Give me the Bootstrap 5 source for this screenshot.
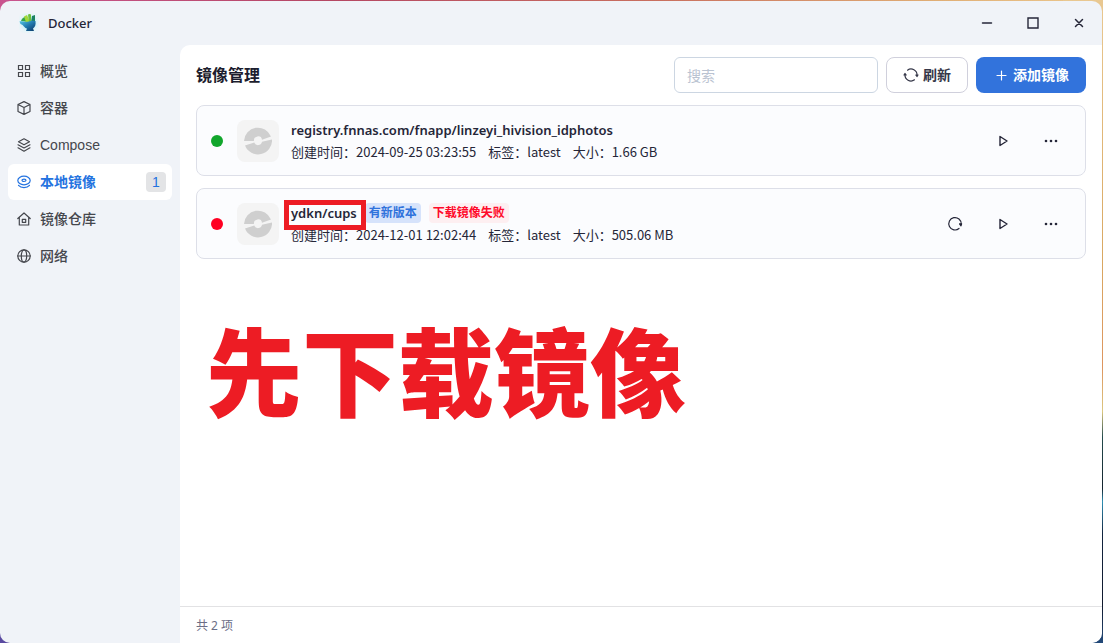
<!DOCTYPE html>
<html lang="zh-CN">
<head>
<meta charset="utf-8">
<meta name="viewport" content="width=device-width, initial-scale=1">
<title>Docker</title>
<link rel="stylesheet" href="https://cdn.jsdelivr.net/npm/bootstrap@5.3.0/dist/css/bootstrap.min.css">
<style>
:root{--ui:"Noto Sans","Noto Sans CJK SC",sans-serif;--ink:#252638;--line:#dddfe8}
body{font-family:var(--ui);font-size:13px;line-height:20px;color:var(--ink);
 background:linear-gradient(#e9c891 0,#d9a862 40%,#dd955f 57%,#dcc780 64%,#244b4d 68%,#14242f 76%,#2f8fb4 78%,#12243f 83%,#111a2e 94%,#234a7a) right/40px 100% no-repeat,
 linear-gradient(90deg,#c9548f,#b54763 30%,#c9705f 60%,#e0ae75 85%,#ecc98f) top/100% 40px no-repeat,#5a4aa0}
.app-window{background:#f0f3f8;border-radius:10px;margin:1px 1px 0 0;height:calc(100vh - 1px)}
.titlebar{height:44px;padding:0 12px 0 18px}
.app-name{font-size:13px;font-weight:500}
.win-btn,.act{border:0;background:none;padding:0;color:var(--ink);display:flex;align-items:center;justify-content:center}
.win-btn{width:22px;height:22px}
.sidebar{width:180px;padding:8px;gap:1px}
.side-link{height:36px;padding:0 6px 0 9px;gap:9px;border-radius:6px;color:#45474d;text-decoration:none;font:500 14px/20px "Liberation Sans","Noto Sans CJK SC",sans-serif}
.side-link.active{background:#fff;color:#2473e0;font-weight:700}
.side-link .count{width:20px;height:20px;border-radius:4px;background:#e3e4e6;font-weight:400;color:#2473e0}
.pane{background:#fff;border-radius:10px 0 10px 0}
.pane-body{padding:12px 16px}
.page-title{font-size:16px;line-height:24px;font-weight:700;color:#1c1d2e}
.search{width:204px;height:36px;font-size:14px;border-color:#ccd6e2;border-radius:6px;padding:0 12px}
.search::placeholder{color:#bac3d1}
.tool{height:36px;border-radius:8px;font-size:14px;line-height:20px;font-weight:700;padding:0 16px;gap:4px}
.tool-plain{border:1px solid #d0d0dc;color:#363849;background:#fff}
.tool-main,.tool-main:hover{background:#3273dc;color:#fff}
.image-list{gap:12px}
.image-row{border:1px solid var(--line);border-radius:8px;background:#fbfcfe;padding:13px 18px 13px 14px;min-height:71px}
.dot{width:12px;height:12px;border-radius:50%;background:#11a62c}
.dot.failed{background:#ff0022}
.thumb{width:42px;height:42px;border-radius:8px;background:#f4f4f4;margin:0 12px 0 14px}
.image-name{font-size:13px;line-height:20px;font-weight:600;font-family:"Noto Sans","Noto Sans CJK SC",sans-serif}
.name-text{position:relative}
.name-text .frame{position:absolute;inset:-3px -9px -7px -7px;border:5px solid #ed1c24;z-index:1}
.tag{border-radius:4px;font-size:12px;line-height:20px;font-weight:700;padding:0 4px}
.tag-new{background:#d6e3fb;color:#2f72dc}
.tag-fail{background:#fdeff1;color:#ff0a2a}
.meta{font-family:"Noto Sans CJK SC",sans-serif;font-size:13px;gap:12px;margin-top:2px}
.act{width:32px;height:32px}
.callout{font:900 96px/120px "Noto Sans CJK SC",sans-serif;color:#ed1c24;margin:49px 0 0 10px;white-space:nowrap}
.pane-foot{border-top:1px solid #e2e2e4;height:37px;padding:1px 16px 0;font-size:12px;color:#6c6e86}
svg{fill:none;stroke:currentColor;stroke-width:1.2;stroke-linecap:round;stroke-linejoin:round;flex:none}
.solid{stroke:none}
</style>
</head>
<body>
<div class="app-window d-flex flex-column overflow-hidden">
 <header class="titlebar d-flex align-items-center flex-shrink-0">
  <svg width="22" height="22" viewBox="0 0 22 22" class="me-2 solid"><defs><linearGradient id="bowl" x2="1" y2="1"><stop stop-color="#55c9e8"/><stop offset=".5" stop-color="#1f79ad"/><stop offset="1" stop-color="#0b3566"/></linearGradient><radialGradient id="glow"><stop offset=".6" stop-color="#c8f3f8"/><stop offset="1" stop-color="#e2f5f8" stop-opacity=".4"/></radialGradient></defs><rect x="1" y="1" width="20" height="20" rx="5" fill="url(#glow)"/><path fill="#35a34b" d="M3 9c1-3 3-4 4-4l3 5z"/><path fill="#a4d838" d="M6 4.500 9 3l3 7H8z"/><path fill="#6fc13a" d="M10 2.500c2-1 3-.5 3 1V10h-2z"/><path fill="#1c8160" d="m14 4 3-1v7h-4z"/><path fill="url(#bowl)" d="M1.500 9.500C4 9 5 10 7 10c4 0 5-2 10.500-1 .5 4-.5 6-2.500 7.500l1 2.500H8l1-2.500C6 16 6 13 2.500 12z"/></svg>
  <span class="app-name">Docker</span>
  <div class="d-flex gap-4 ms-auto">
   <button class="win-btn" aria-label="最小化"><svg width="12" height="12" viewBox="0 0 12 12"><path d="M1.500 6h9" stroke-width="1.500"/></svg></button>
   <button class="win-btn" aria-label="最大化"><svg width="12" height="12" viewBox="0 0 12 12"><path stroke-linejoin="miter" stroke-width="1.400" d="M1 1h10v10H1z"/></svg></button>
   <button class="win-btn" aria-label="关闭"><svg width="12" height="12" viewBox="0 0 12 12"><path d="m2.500 2.500 7 7m0-7-7 7" stroke-width="1.500"/></svg></button>
  </div>
 </header>
 <div class="d-flex flex-grow-1">
  <nav class="sidebar d-flex flex-column flex-shrink-0">
   <a href="#" class="side-link d-flex align-items-center"><svg width="14" height="14" viewBox="0 0 14 14"><path stroke-linejoin="miter" d="M1.500 1.500h4v4h-4zM8.500 1.500h4v4h-4zM1.500 8.500h4v4h-4zM8.500 8.500h4v4h-4z"/></svg>概览</a>
   <a href="#" class="side-link d-flex align-items-center"><svg width="14" height="14" viewBox="0 0 14 14"><path d="m7 .6 6 2.900v7L7 13.400 1 10.500v-7zM1 3.500l6 3 6-3M7 6.500v6.900"/></svg>容器</a>
   <a href="#" class="side-link d-flex align-items-center"><svg width="14" height="14" viewBox="0 0 14 14"><path d="m7 .8 5.500 3L7 6.800l-5.500-3zM1 6.800l6 3.200 6-3.200M1 9.800l6 3.400 6-3.400"/></svg>Compose</a>
   <a href="#" class="side-link active d-flex align-items-center" aria-current="page"><svg width="14" height="14" viewBox="0 0 14 14"><ellipse cx="7" cy="5.500" rx="6.200" ry="4.300"/><ellipse cx="7" cy="5.300" rx="2" ry="1.200"/><path d="M1.500 10.300c2.500 3 8.500 3 11 0"/></svg>本地镜像<span class="count ms-auto text-center">1</span></a>
   <a href="#" class="side-link d-flex align-items-center"><svg width="14" height="14" viewBox="0 0 14 14"><path d="m.8 6.500 6.200-5.500 6.200 5.500M2.300 5.500v7.500h9.400V5.500M5.300 7.300h3.400v3H5.300z"/></svg>镜像仓库</a>
   <a href="#" class="side-link d-flex align-items-center"><svg width="14" height="14" viewBox="0 0 14 14"><circle cx="7" cy="7" r="6.200"/><ellipse cx="7" cy="7" rx="2.700" ry="6.200"/><path d="M.8 7h12.400"/></svg>网络</a>
  </nav>
  <main class="pane d-flex flex-column flex-grow-1">
   <div class="pane-body flex-grow-1">
    <div class="d-flex align-items-center gap-2 mb-2 pb-1">
     <h1 class="page-title mb-0 me-auto">镜像管理</h1>
     <input type="search" class="form-control search" placeholder="搜索" aria-label="搜索">
     <button class="btn tool tool-plain d-flex align-items-center"><svg width="16" height="16" viewBox="0 0 16 16"><path d="M4.500 3.200A6 6 0 0 1 14 8.500M11.500 12.800A6 6 0 0 1 2 7.500"/><path fill="currentColor" d="m12.800 8 1.200 1.500L15 8zM1 8l1-1.500L3.200 8z"/></svg>刷新</button>
     <button class="btn tool tool-main d-flex align-items-center"><svg width="16" height="16" viewBox="0 0 16 16"><path d="M8.500 4v9M4 8.500h9"/></svg>添加镜像</button>
    </div>
    <div class="image-list d-flex flex-column">
    <article class="image-row d-flex align-items-center">
     <span class="dot"></span>
     <div class="thumb d-flex align-items-center justify-content-center"><svg class="solid" width="28" height="28" viewBox="0 0 28 28"><g fill="#cfcfcf"><path d="M0 14A14 14 0 0 1 27 9.500L18 12.800A4 4 0 0 0 10 14z"/><path d="M28 12.500A14 14 0 0 1 1 18.500L10.300 15.500A4 4 0 0 0 18 14.800z"/></g></svg></div>
     <div class="flex-grow-1">
      <div class="image-name">registry.fnnas.com/fnapp/linzeyi_hivision_idphotos</div>
      <div class="meta d-flex"><span>创建时间：2024-09-25 03:23:55</span><span>标签：latest</span><span>大小：1.66 GB</span></div>
     </div>
     <div class="d-flex gap-3">
      <button class="act" aria-label="运行"><svg width="16" height="16" viewBox="0 0 16 16"><path stroke-width="1.400" d="M5 3.500v9l7-4.500z"/></svg></button>
      <button class="act" aria-label="更多"><svg class="solid" width="16" height="16" viewBox="0 0 16 16"><g fill="currentColor"><circle cx="3" cy="8" r="1.300"/><circle cx="8" cy="8" r="1.300"/><circle cx="13" cy="8" r="1.300"/></g></svg></button>
     </div>
    </article>
    <article class="image-row d-flex align-items-center">
     <span class="dot failed"></span>
     <div class="thumb d-flex align-items-center justify-content-center"><svg class="solid" width="28" height="28" viewBox="0 0 28 28"><g fill="#cfcfcf"><path d="M0 14A14 14 0 0 1 27 9.500L18 12.800A4 4 0 0 0 10 14z"/><path d="M28 12.500A14 14 0 0 1 1 18.500L10.300 15.500A4 4 0 0 0 18 14.800z"/></g></svg></div>
     <div class="flex-grow-1">
      <div class="image-name d-flex gap-2"><span class="name-text">ydkn/cups<span class="frame"></span></span><span class="tag tag-new">有新版本</span><span class="tag tag-fail">下载镜像失败</span></div>
      <div class="meta d-flex"><span>创建时间：2024-12-01 12:02:44</span><span>标签：latest</span><span>大小：505.06 MB</span></div>
     </div>
     <div class="d-flex gap-3">
      <button class="act" aria-label="重试"><svg width="16" height="16" viewBox="0 0 16 16"><path d="M12 12.500A6.200 6.200 0 1 1 14.200 8"/><path fill="currentColor" d="m12.500 7.800 1.500 2 .6-2z"/></svg></button>
      <button class="act" aria-label="运行"><svg width="16" height="16" viewBox="0 0 16 16"><path stroke-width="1.400" d="M5 3.500v9l7-4.500z"/></svg></button>
      <button class="act" aria-label="更多"><svg class="solid" width="16" height="16" viewBox="0 0 16 16"><g fill="currentColor"><circle cx="3" cy="8" r="1.300"/><circle cx="8" cy="8" r="1.300"/><circle cx="13" cy="8" r="1.300"/></g></svg></button>
     </div>
    </article>
    </div>
    <p class="callout">先下载镜像</p>
   </div>
   <footer class="pane-foot d-flex align-items-center">共 2 项</footer>
  </main>
 </div>
</div>
<script src="https://cdn.jsdelivr.net/npm/bootstrap@5.3.0/dist/js/bootstrap.bundle.min.js"></script>
</body>
</html>
